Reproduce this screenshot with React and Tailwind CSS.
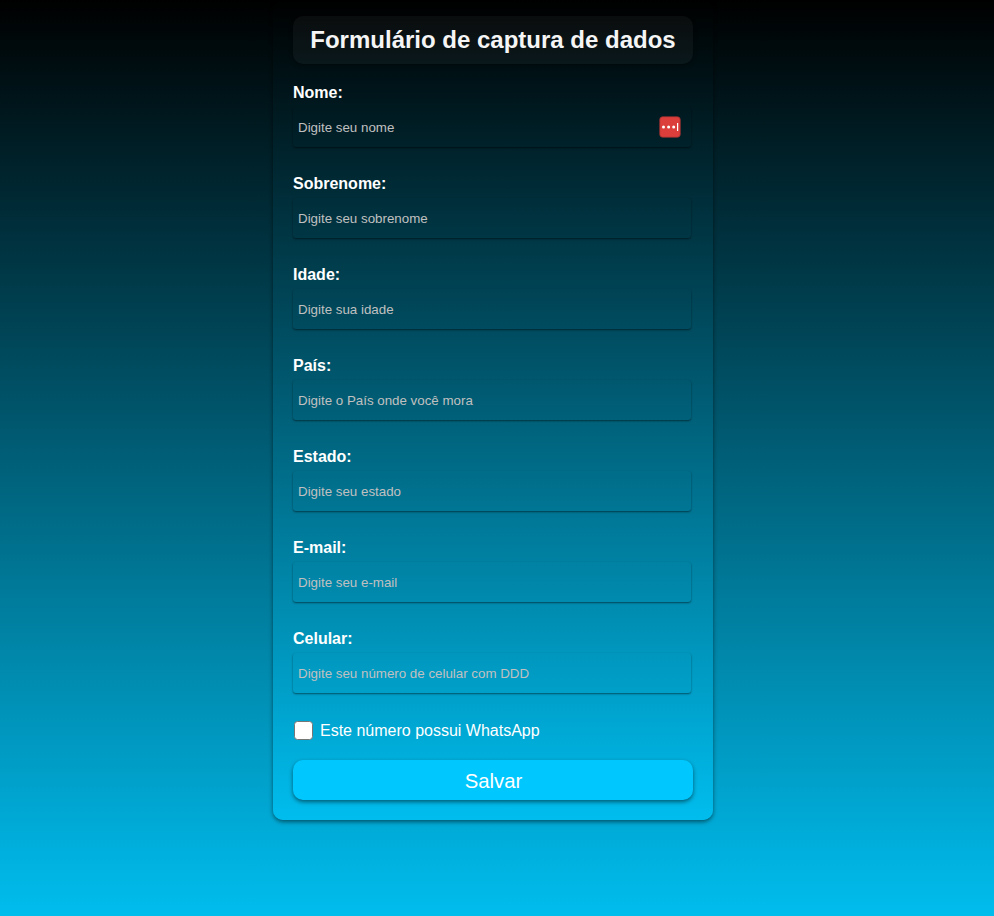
const fields = [
  { id: "nome", label: "Nome:", placeholder: "Digite seu nome", badge: true },
  { id: "sobrenome", label: "Sobrenome:", placeholder: "Digite seu sobrenome" },
  { id: "idade", label: "Idade:", placeholder: "Digite sua idade" },
  { id: "pais", label: "País:", placeholder: "Digite o País onde você mora" },
  { id: "estado", label: "Estado:", placeholder: "Digite seu estado" },
  { id: "email", label: "E-mail:", placeholder: "Digite seu e-mail" },
  { id: "celular", label: "Celular:", placeholder: "Digite seu número de celular com DDD" },
];

function PasswordManagerBadge() {
  return (
    <svg className="absolute right-[10px] top-[9px] h-[22px] w-[22px]" viewBox="0 0 22 22">
      <rect x="0.7" y="0.7" width="20.6" height="20.6" rx="3" fill="#dc3f3b" stroke="#8c3030" strokeWidth="0.8" />
      <g fill="#fff">
        <circle cx="4.5" cy="11" r="1.5" />
        <circle cx="9.6" cy="11" r="1.5" />
        <circle cx="14.7" cy="11" r="1.5" />
        <rect x="18" y="7" width="1.2" height="8" />
      </g>
    </svg>
  );
}

function Field({ id, label, placeholder, badge }) {
  return (
    <div className="mb-[27px] flex flex-col">
      <label htmlFor={id} className="mb-1 h-5 text-base leading-5 font-bold text-white">
        {label}
      </label>
      <div className="relative w-[398px]">
        <input
          id={id}
          placeholder={placeholder}
          className="block h-10 w-full rounded-[3px] bg-transparent px-[5px] text-[13.333px] text-white shadow-[0_1px_2px_rgba(0,0,0,0.5)] outline-none placeholder:text-[#c0c0c0]"
        />
        {badge && <PasswordManagerBadge />}
      </div>
    </div>
  );
}

export default function App() {
  return (
    <div className="flex h-[916px] items-start justify-center bg-linear-[to_bottom,#000,#00bdee] pr-2 font-['Liberation_Sans',Arial,sans-serif]">
      <form className="flex h-[820px] w-[440px] flex-col rounded-[10px] bg-linear-[to_bottom,#000,#00bdee] px-5 pt-4 shadow-[0_2px_4px_rgba(0,0,0,0.5)]">
        <h1 className="mb-[19px] h-12 rounded-[10px] bg-white/4 text-center text-2xl leading-12 font-bold text-[#f5f5f5] shadow-[0_2px_4px_rgba(0,0,0,0.3)]">
          Formulário de captura de dados
        </h1>
        {fields.map((field) => (
          <Field key={field.id} {...field} />
        ))}
        <label className="flex h-5 items-center text-base text-white">
          <input
            type="checkbox"
            className="mr-[7px] ml-px h-[19px] w-[19px] appearance-none rounded-[3.5px] border border-[#767676] bg-white"
          />
          <span className="pt-[2px]">Este número possui WhatsApp</span>
        </label>
        <button
          type="button"
          className="mt-5 h-10 w-full rounded-[10px] bg-[#00c8ff] pt-[3px] pl-px text-[20.3px] text-white shadow-[0_2px_4px_rgba(0,0,0,0.5)]"
        >
          Salvar
        </button>
      </form>
    </div>
  );
}
